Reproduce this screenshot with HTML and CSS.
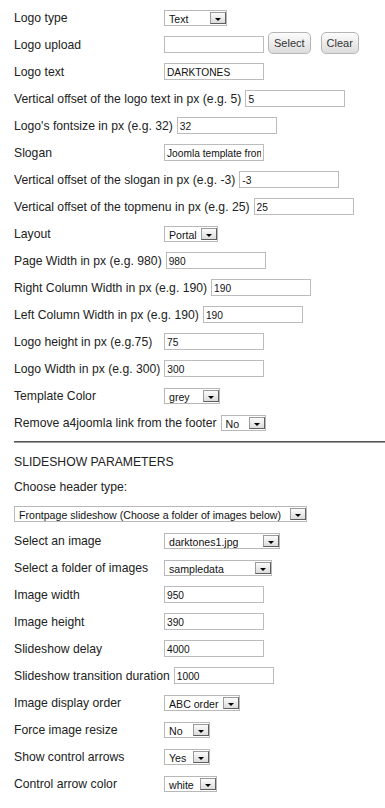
FILE: index.html
```html
<!DOCTYPE html>
<html lang="en">
<head>
<meta charset="UTF-8">
<title>Template Parameters</title>
<link rel="stylesheet" href="styles.css">
</head>
<body>
<div class="params">
  <div class="row"><span class="key">Logo type</span><div class="sel w63"><span>Text</span><i class="drop"></i></div></div>
  <div class="row"><span class="key">Logo upload</span><input class="txt" type="text" value=""><button class="btn">Select</button><button class="btn clear">Clear</button></div>
  <div class="row"><span class="key">Logo text</span><input class="txt" type="text" value="DARKTONES"></div>
  <div class="row"><span class="key">Vertical offset of the logo text in px (e.g. 5)</span><input class="txt" type="text" value="5"></div>
  <div class="row"><span class="key">Logo's fontsize in px (e.g. 32)</span><input class="txt" type="text" value="32"></div>
  <div class="row"><span class="key">Slogan</span><input class="txt" type="text" value="Joomla template from a4joomla"></div>
  <div class="row"><span class="key">Vertical offset of the slogan in px (e.g. -3)</span><input class="txt" type="text" value="-3"></div>
  <div class="row"><span class="key">Vertical offset of the topmenu in px (e.g. 25)</span><input class="txt" type="text" value="25"></div>
  <div class="row"><span class="key">Layout</span><div class="sel w54"><span>Portal</span><i class="drop"></i></div></div>
  <div class="row"><span class="key">Page Width in px (e.g. 980)</span><input class="txt" type="text" value="980"></div>
  <div class="row"><span class="key">Right Column Width in px (e.g. 190)</span><input class="txt" type="text" value="190"></div>
  <div class="row"><span class="key">Left Column Width in px (e.g. 190)</span><input class="txt" type="text" value="190"></div>
  <div class="row"><span class="key">Logo height in px (e.g.75)</span><input class="txt" type="text" value="75"></div>
  <div class="row"><span class="key">Logo Width in px (e.g. 300)</span><input class="txt" type="text" value="300"></div>
  <div class="row"><span class="key">Template Color</span><div class="sel w56"><span>grey</span><i class="drop"></i></div></div>
  <div class="row"><span class="key">Remove a4joomla link from the footer</span><div class="sel w45"><span>No</span><i class="drop"></i></div></div>

  <hr class="sep">

  <div class="row title"><span class="key">SLIDESHOW PARAMETERS</span></div>
  <div class="row"><span class="key">Choose header type:</span></div>
  <div class="row"><div class="sel w293"><span>Frontpage slideshow (Choose a folder of images below)</span><i class="drop"></i></div></div>
  <div class="row"><span class="key">Select an image</span><div class="sel w116"><span>darktones1.jpg</span><i class="drop"></i></div></div>
  <div class="row"><span class="key">Select a folder of images</span><div class="sel w108"><span>sampledata</span><i class="drop"></i></div></div>
  <div class="row"><span class="key">Image width</span><input class="txt" type="text" value="950"></div>
  <div class="row"><span class="key">Image height</span><input class="txt" type="text" value="390"></div>
  <div class="row"><span class="key">Slideshow delay</span><input class="txt" type="text" value="4000"></div>
  <div class="row"><span class="key">Slideshow transition duration</span><input class="txt" type="text" value="1000"></div>
  <div class="row"><span class="key">Image display order</span><div class="sel w76"><span>ABC order</span><i class="drop"></i></div></div>
  <div class="row"><span class="key">Force image resize</span><div class="sel w46"><span>No</span><i class="drop"></i></div></div>
  <div class="row"><span class="key">Show control arrows</span><div class="sel w46"><span>Yes</span><i class="drop"></i></div></div>
  <div class="row"><span class="key">Control arrow color</span><div class="sel w53"><span>white</span><i class="drop"></i></div></div>
</div>
</body>
</html>
```

FILE: styles.css
```css
html, body {
  margin: 0;
  padding: 0;
  background: #fff;
}
body {
  font-family: "Liberation Sans", Arial, sans-serif;
  font-size: 12.2px;
  color: #222;
}
.params {
  padding: 9px 0 0 14px;
}
.row {
  display: flex;
  align-items: center;
  gap: 4px;
  height: 17px;
  margin-bottom: 10px;
}
.key {
  min-width: 146px;
  white-space: nowrap;
}
.txt {
  box-sizing: border-box;
  width: 100px;
  height: 17px;
  margin: 0;
  padding: 2px 2px 0;
  border: 1px solid #bcbcbc;
  font-family: "Liberation Sans", Arial, sans-serif;
  font-size: 10.2px;
  color: #111;
  outline: none;
}

/* fake dropdowns */
.sel {
  position: relative;
  box-sizing: border-box;
  height: 16px;
  border: 1px solid #b8b8b8;
  font-size: 10.6px;
  color: #111;
  line-height: 16px;
  padding-left: 4px;
  overflow: hidden;
  white-space: nowrap;
}
.sel .drop {
  position: absolute;
  top: 1px;
  right: 0;
  bottom: 1px;
  box-sizing: border-box;
  width: 16px;
  border: 1px solid #5e5e5e;
  border-top-color: #9a9a9a;
  border-left-color: #9a9a9a;
  background: linear-gradient(#fbfbfb, #dcdcdc);
}
.sel .drop::after {
  content: "";
  position: absolute;
  left: 4px;
  top: 5px;
  border-left: 3px solid transparent;
  border-right: 3px solid transparent;
  border-top: 3px solid #000;
}
.w45 { width: 45px; }
.w46 { width: 46px; }
.w53 { width: 53px; }
.w54 { width: 54px; }
.w56 { width: 56px; }
.w63 { width: 63px; }
.w76 { width: 76px; }
.w108 { width: 108px; }
.w116 { width: 116px; }
.w293 { width: 293px; }

.btn {
  align-self: flex-end;
  box-sizing: border-box;
  height: 22px;
  margin: 0 0 -1px;
  padding: 0 5px;
  border: 1px solid #b5b5b5;
  border-radius: 5px;
  background: linear-gradient(#fcfcfc, #dcdcdc);
  font-family: "Liberation Sans", Arial, sans-serif;
  font-size: 11px;
  color: #333;
}
.btn.clear {
  margin-left: 6px;
}

.sep {
  height: 0;
  margin: 0 0 10px;
  border: 0;
  border-top: 1px solid #555;
  border-bottom: 1px solid #9a9a9a;
}
.row.title {
  margin-bottom: 8px;
}
```
